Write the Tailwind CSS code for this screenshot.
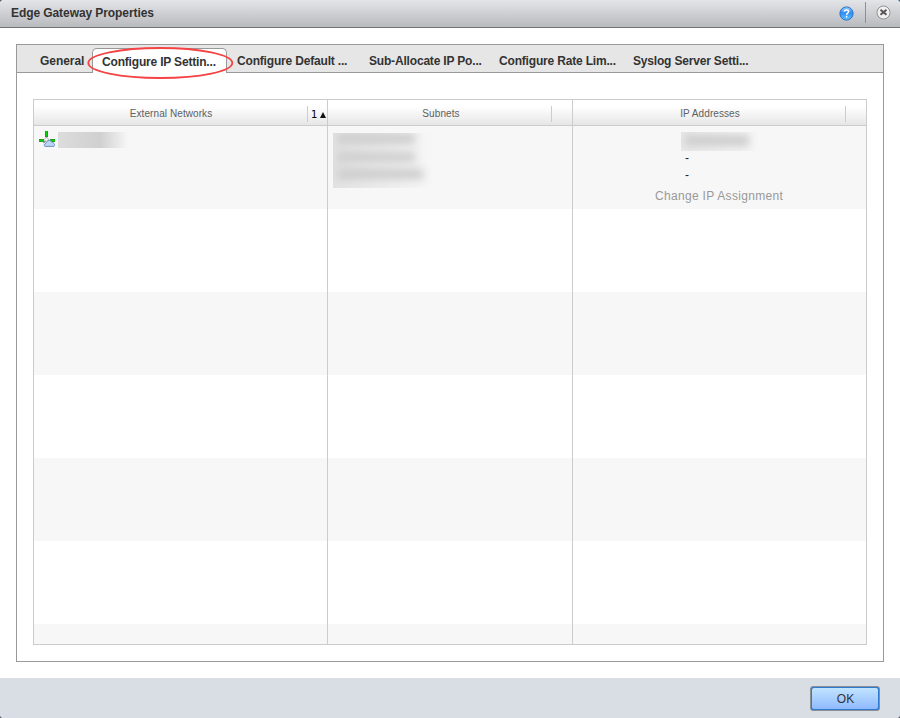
<!DOCTYPE html>
<html lang="en">
<head>
<meta charset="utf-8">
<title>Edge Gateway Properties</title>
<script src="https://cdn.jsdelivr.net/npm/@tailwindcss/browser@4"></script>
</head>
<body class="w-[900px] h-[718px] overflow-hidden bg-[#53606e] font-['Liberation_Sans',Arial,sans-serif] text-xs text-[#333]">
<div class="flex flex-col w-[900px] h-[718px] bg-white rounded-[4px] overflow-hidden">
  <header class="flex items-center shrink-0 h-7 pl-[11px] pr-[9px] border-b border-[#737478] bg-linear-to-b from-[#e4e5e9] to-[#b9babe]">
    <h1 class="font-bold leading-4 -mt-0.5 grow whitespace-nowrap tracking-[-0.08px]">Edge Gateway Properties</h1>
    <svg class="w-[15px] h-[15px] -mt-px" viewBox="0 0 15 15">
      <defs><linearGradient id="help" x1="0" y1="0" x2="0" y2="1"><stop offset="0" stop-color="#9ad0ff"/><stop offset=".45" stop-color="#2f8df4"/><stop offset="1" stop-color="#62c4ff"/></linearGradient></defs>
      <circle cx="7.5" cy="7.5" r="6.6" fill="url(#help)" stroke="#2a70c4" stroke-width="1"/>
      <path d="M5.3 5.6C5.4 3.4 9.6 3.5 9.6 5.6C9.6 7.1 7.6 7 7.6 8.7M7.6 9.8v1.6" fill="none" stroke="#fff" stroke-width="1.5"/>
    </svg>
    <div class="w-px h-[21px] ml-[11px] -mt-[3px] bg-[#8e8f94]"></div>
    <svg class="w-[15px] h-[15px] ml-2.5 -mt-[3px]" viewBox="0 0 15 15">
      <circle cx="7.5" cy="7.5" r="6.5" fill="#f0f0f0" stroke="#929292" stroke-width="1"/>
      <path d="M4.5 4.8L10.5 9.8M10.5 4.8L4.5 9.8" stroke="#555" stroke-width="2"/>
    </svg>
  </header>

  <main class="grow px-4 pt-4">
    <section class="w-[868px] h-[618px] border border-[#999]">
      <nav class="relative flex h-7 pl-[23px] bg-[#e6e6e6] border-b border-[#999] font-bold leading-4 whitespace-nowrap tracking-[-0.18px]">
        <div class="w-[52px] pt-2 tracking-[-0.05px]">General</div>
        <div class="w-[135px] h-[25px] mt-[3px] pl-[9px] pt-[5px] bg-white border border-b-0 border-[#999] rounded-t-[5px]">Configure IP Settin...</div>
        <div class="w-[132px] pl-2.5 pt-2 mr-[10px]">Configure Default ...</div>
        <div class="w-[130px] pt-2">Sub-Allocate IP Po...</div>
        <div class="w-[134px] pt-2">Configure Rate Lim...</div>
        <div class="pt-2">Syslog Server Setti...</div>
        <svg class="absolute left-[70px] top-[1px] w-[148px] h-[34px]" viewBox="0 0 148 34"><ellipse cx="73.3" cy="17" rx="72" ry="15" fill="none" stroke="#f54242" stroke-width="1.8"/></svg>
      </nav>

      <div class="mt-[26px] ml-4 w-[834px] h-[546px] border border-[#ccc] flex flex-col">
        <div class="grid grid-cols-[294px_245px_293px] h-[26px] border-b border-[#ccc] bg-linear-to-b from-white from-25% to-[#e6e6e6] text-[10px] leading-[18px] text-[#606060] tracking-[0.08px]">
          <div class="flex border-r border-[#ccc] pt-1.5">
            <div class="w-[274px] h-4 pl-px text-center border-r border-[#ccc]"><span class="block -mt-px">External Networks</span></div>
            <div class="flex items-center h-4 pl-[3px] text-black font-['DejaVu_Sans',Verdana,sans-serif] tracking-normal"><span class="pt-px">1</span><svg class="w-[6px] h-[6px] ml-[3px] mt-0.5" viewBox="0 0 6 6"><path d="M3 0L6 6H0Z" fill="#111"/></svg></div>
          </div>
          <div class="flex border-r border-[#ccc] pt-1.5">
            <div class="w-[224px] h-4 pl-[3px] text-center border-r border-[#ccc]"><span class="block -mt-px">Subnets</span></div>
          </div>
          <div class="flex pt-1.5">
            <div class="w-[273px] h-4 pl-[2px] text-center border-r border-[#ccc]"><span class="block -mt-px">IP Addresses</span></div>
          </div>
        </div>
        <div class="grow grid grid-cols-[294px_245px_293px] bg-[repeating-linear-gradient(to_bottom,#f7f7f7_0,#f7f7f7_83px,#fff_83px,#fff_166px)]">
          <div class="border-r border-[#ccc] pl-[5px] pt-[5px] flex items-start">
            <svg class="w-4 h-4" viewBox="0 0 16 16">
              <path d="M7.5 0V6M0 9.5H5M11 9.5H16" stroke="#2a8f2a" stroke-width="3"/>
              <path d="M7.5 0V5M0 9.5H5M11 9.5H16" stroke="#08cf08" stroke-width="1.4"/>
              <path d="M7.5 6V9L4.5 12M8 8L11 10" stroke="#888" stroke-width="1.4" fill="none"/>
              <circle cx="7.5" cy="8.5" r="1.8" fill="#f4f4f4" stroke="#aaa" stroke-width=".6"/>
              <path d="M6 15.4C4.4 14.6 5.2 12.8 7 12.4C7.6 9 11.8 8.4 12.8 11.4C15.4 11.6 16.4 14.2 15 15.4Z" fill="#bcd5f5" stroke="#6c92c6" stroke-width="1"/>
            </svg>
            <div class="ml-[3px] mt-px w-[70px] h-4 bg-linear-to-r from-[#dcdcdc] via-[#d0d0d0] via-60% to-[#f7f7f7]"></div>
          </div>
          <div class="border-r border-[#ccc] pl-[5px] pt-[7px]">
            <div class="relative w-[100px] h-[55px] overflow-hidden bg-linear-to-r from-[#e2e2e2] to-[#f7f7f7]">
              <div class="absolute left-1 top-0 w-[78px] h-[11px] bg-[#cdcdcd] blur-[4px]"></div>
              <div class="absolute left-1 top-[19px] w-[78px] h-[10px] bg-[#cdcdcd] blur-[4px]"></div>
              <div class="absolute left-1 top-[36px] w-[86px] h-[10px] bg-[#cbcbcb] blur-[4px]"></div>
            </div>
          </div>
          <div class="pt-[6px] leading-[17px] text-[#222]">
            <div class="relative ml-[108px] w-[79px] h-[19px] overflow-hidden bg-linear-to-r from-[#e8e8e8] to-[#f7f7f7]"><div class="absolute left-1 top-[3px] w-[64px] h-[11px] bg-[#ccc] blur-[4px]"></div></div>
            <div class="pl-[112px] -mt-px">-</div>
            <div class="pl-[112px]">-</div>
            <div class="pl-[82px] mt-1 text-[#999] whitespace-nowrap tracking-[0.31px]"><span>Change IP Assignment</span></div>
          </div>
        </div>
      </div>
    </section>
  </main>

  <footer class="shrink-0 h-10 bg-[#d9dde4] flex justify-end items-center pr-5">
    <button class="w-[70px] h-[25px] mt-px rounded-[3px] border border-[#8b8f94] p-px bg-[#2f7bd2]"><span class="block h-[21px] pl-px leading-[22px] rounded-[2px] bg-linear-to-b from-[#c2e4ff] to-[#8fb9ff] text-[#333]">OK</span></button>
  </footer>
</div>
</body>
</html>
